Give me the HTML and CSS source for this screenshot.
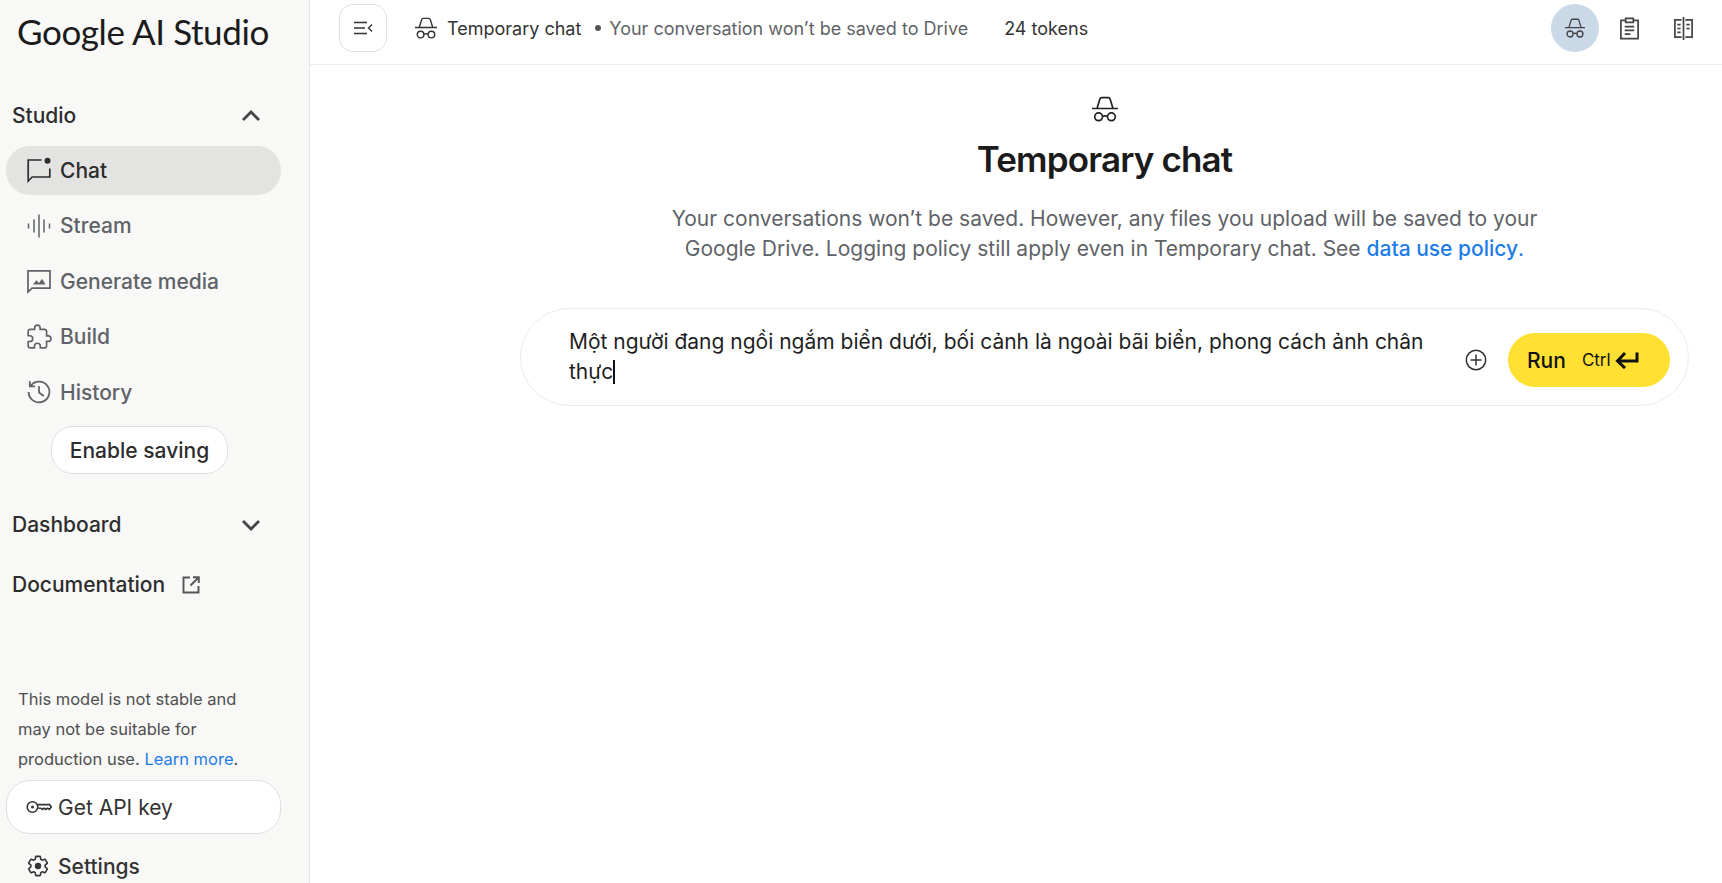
FILE: index.html
```html
<!DOCTYPE html>
<html lang="vi">
<head>
<meta charset="utf-8">
<title>Google AI Studio</title>
<link rel="stylesheet" href="styles.css">
</head>
<body>
<svg class="defs" width="0" height="0" aria-hidden="true">
  <symbol id="incognito" viewBox="0 0 26 26">
    <path d="M0 12.500h26M5 12.500L8 2.800q.4-1.200 1.600-1.200h6.800q1.200 0 1.600 1.200l3 9.700" fill="none" stroke="currentColor" stroke-width="1.700"/>
    <circle cx="6.600" cy="20.800" r="3.900" fill="none" stroke="currentColor" stroke-width="1.700"/>
    <circle cx="19.400" cy="20.800" r="3.900" fill="none" stroke="currentColor" stroke-width="1.700"/>
    <path d="M10.500 20.300q2.500-1 5 0" fill="none" stroke="currentColor" stroke-width="1.700"/>
  </symbol>
</svg>
<div class="app">
  <aside class="sidebar">
    <div class="logo">Google AI Studio</div>
    <div class="section-head studio-head">
      <span>Studio</span>
      <svg class="chev" viewBox="0 0 20 12"><path d="M2 10l8-8 8 8" fill="none" stroke="currentColor" stroke-width="2.800"/></svg>
    </div>
    <nav class="nav">
      <a class="nav-item active">
        <svg class="nav-icon" viewBox="0 0 26 26"><path d="M15.500 3H2.200v21l4-4h17.600v-8.500" fill="none" stroke="currentColor" stroke-width="1.700"/><circle cx="21.500" cy="3.800" r="3" fill="currentColor"/></svg>
        <span>Chat</span>
      </a>
      <a class="nav-item">
        <svg class="nav-icon" viewBox="0 0 26 26"><path d="M2.500 10.500v5M8 6.500v13M13 1.500v23M18 6.500v13M23.500 10.500v5" fill="none" stroke="currentColor" stroke-width="1.500"/></svg>
        <span>Stream</span>
      </a>
      <a class="nav-item">
        <svg class="nav-icon" viewBox="0 0 26 26"><path d="M2 24V2.800h22v17.400H6l-4 3.800z" fill="none" stroke="currentColor" stroke-width="1.700"/><path d="M7 16.500l3.400-4.200 2.600 2.600 3-4.200 3.600 5.800z" fill="currentColor"/></svg>
        <span>Generate media</span>
      </a>
      <a class="nav-item">
        <svg class="nav-icon" viewBox="0 0 24 24"><path d="M20.500 11H19V7c0-1.100-.9-2-2-2h-4V3.500C13 2.120 11.880 1 10.500 1S8 2.120 8 3.500V5H4c-1.100 0-1.990.9-1.990 2v3.800H3.500c1.490 0 2.700 1.210 2.700 2.700s-1.210 2.700-2.700 2.700H2V20c0 1.100.9 2 2 2h3.800v-1.500c0-1.490 1.210-2.700 2.700-2.700 1.490 0 2.700 1.210 2.700 2.700V22H17c1.100 0 2-.9 2-2v-4h1.500c1.380 0 2.500-1.120 2.500-2.500S21.880 11 20.500 11z" fill="none" stroke="currentColor" stroke-width="1.500"/></svg>
        <span>Build</span>
      </a>
      <a class="nav-item">
        <svg class="nav-icon" viewBox="0 0 26 26"><path d="M4.800 6.600A10.400 10.400 0 1 1 2.600 13M3.800 2.300v5h5.200" fill="none" stroke="currentColor" stroke-width="1.800"/><path d="M13 7.300v6.200l4.800 3.500" fill="none" stroke="currentColor" stroke-width="1.800"/></svg>
        <span>History</span>
      </a>
    </nav>
    <button class="enable-btn">Enable saving</button>
    <div class="section-head dash-head">
      <span>Dashboard</span>
      <svg class="chev" viewBox="0 0 20 12"><path d="M2 2l8 8 8-8" fill="none" stroke="currentColor" stroke-width="2.800"/></svg>
    </div>
    <div class="section-head doc-head">
      <span>Documentation</span>
      <svg class="ext" viewBox="0 0 20 20"><path d="M9 2.500H2.500v15h15V11M9.500 10.500L17.500 2.500M12 2.200h5.800V8" fill="none" stroke="currentColor" stroke-width="1.900"/></svg>
    </div>
    <div class="spacer"></div>
    <p class="note">This model is not stable and may not be suitable for production use. <a class="link">Learn more</a>.</p>
    <button class="api-btn">
      <svg class="key" viewBox="0 0 26 16"><circle cx="6.500" cy="8" r="5.300" fill="none" stroke="currentColor" stroke-width="1.600"/><circle cx="6.500" cy="8" r="1.500" fill="currentColor"/><path d="M11.800 5.600h11.700l1.800 2.400-2 2.400-1.700-1.200-1.700 1.200-1.700-1.200-1.700 1.200-1.700-1.200h-2.500" fill="none" stroke="currentColor" stroke-width="1.600"/></svg>
      <span>Get API key</span>
    </button>
    <div class="settings">
      <svg class="gear" viewBox="0 0 24 24"><path d="M19.140 12.940c.04-.3.06-.61.06-.94 0-.32-.02-.64-.07-.94l2.030-1.580c.18-.14.23-.41.12-.61l-1.920-3.320c-.12-.22-.37-.29-.59-.22l-2.390.96c-.5-.38-1.030-.7-1.620-.94l-.36-2.540c-.04-.24-.24-.41-.48-.41h-3.840c-.24 0-.43.17-.47.41l-.36 2.540c-.59.24-1.130.57-1.620.94l-2.390-.96c-.22-.08-.47 0-.59.22L2.740 8.870c-.12.21-.08.47.12.61l2.030 1.580c-.05.3-.09.63-.09.94s.02.64.07.94l-2.030 1.580c-.18.14-.23.41-.12.61l1.920 3.320c.12.22.37.29.59.22l2.390-.96c.5.38 1.030.7 1.620.94l.36 2.540c.05.24.24.41.48.41h3.840c.24 0 .44-.17.47-.41l.36-2.540c.59-.24 1.130-.56 1.620-.94l2.390.96c.22.08.47 0 .59-.22l1.920-3.320c.12-.22.07-.47-.12-.61l-2.010-1.580z" fill="none" stroke="currentColor" stroke-width="1.600" stroke-linejoin="round"/><circle cx="12" cy="12" r="3.200" fill="currentColor"/></svg>
      <span>Settings</span>
    </div>
  </aside>

  <main class="main">
    <header class="topbar">
      <button class="toggle">
        <svg viewBox="0 0 20 14" class="toggle-icon"><path d="M1 1.500h13M1 7h11M1 12.500h13M19 3.500L15.500 7l3.500 3.500" fill="none" stroke="currentColor" stroke-width="1.400"/></svg>
      </button>
      <svg class="top-hat"><use href="#incognito"/></svg>
      <span class="top-title">Temporary chat</span>
      <span class="dot"></span>
      <span class="top-sub">Your conversation won’t be saved to Drive</span>
      <span class="tokens">24 tokens</span>
      <div class="top-actions">
        <span class="round active-round"><svg class="top-hat-small"><use href="#incognito"/></svg></span>
        <span class="round">
          <svg class="act-icon" viewBox="0 0 22 24"><path d="M7 3.500H2v19h18v-19h-5M7 1.500h8v4H7zM6 10h10M6 14h10M6 18h6" fill="none" stroke="currentColor" stroke-width="1.800"/></svg>
        </span>
        <span class="round">
          <svg class="act-icon" viewBox="0 0 22 24"><path d="M11 0v24M9 3H2v18h7M13 3h7v18h-7M4.500 8H8M4.500 12H8M4.500 16H8M14 8h3.500M14 12h3.500" fill="none" stroke="currentColor" stroke-width="1.800"/></svg>
        </span>
      </div>
    </header>
    <section class="content">
      <svg class="hero-hat"><use href="#incognito"/></svg>
      <h1 class="hero-title">Temporary chat</h1>
      <p class="hero-text">Your conversations won’t be saved. However, any files you upload will be saved to your<br>Google Drive. Logging policy still apply even in Temporary chat. See <a class="link">data use policy</a><span class="link-dot">.</span></p>
      <div class="prompt">
        <div class="prompt-text">Một người đang ngồi ngắm biển dưới, bối cảnh là ngoài bãi biển, phong cách ảnh chân thực<span class="caret"></span></div>
        <svg class="plus" viewBox="0 0 22 22"><circle cx="11" cy="11" r="9.700" fill="none" stroke="currentColor" stroke-width="1.500"/><path d="M11 5.500v11M5.500 11h11" fill="none" stroke="currentColor" stroke-width="1.500"/></svg>
        <button class="run">
          <span class="run-label">Run</span>
          <span class="run-ctrl">Ctrl</span>
          <svg class="run-enter" viewBox="0 0 24 18"><path d="M22 1.500v8.500H3M10 2L2.500 10l7.500 7" fill="none" stroke="currentColor" stroke-width="3"/></svg>
        </button>
      </div>
    </section>
  </main>
</div>
</body>
</html>
```
FILE: styles.css
```css
* { box-sizing: border-box; }
html, body { margin: 0; height: 100%; overflow: hidden; }
body { font-family: Inter, "Liberation Sans", sans-serif; color: #1f1f1f; background: #fff; }
.defs { position: absolute; }
.app { display: flex; height: 883px; }

.sidebar { width: 310px; flex: none; background: #f8f8f6; border-right: 1px solid #e6e6e6; display: flex; flex-direction: column; padding: 0 0 0 6px; }
.logo { font-family: Lato, sans-serif; font-size: 35px; line-height: 44px; color: #1b1b1b; margin: 9px 0 0 11px; letter-spacing: -0.4px; white-space: nowrap; }
.section-head { display: flex; align-items: center; font-size: 21px; line-height: 28px; color: #2d2d2d; padding-left: 6px; font-weight: 450; }
.section-head span { flex: none; }
.studio-head { margin-top: 49px; }
.dash-head { margin-top: 36.500px; }
.doc-head { margin-top: 32px; }
.chev { width: 20px; height: 12px; margin-left: auto; margin-right: 48px; color: #444; }
.ext { width: 20px; height: 20px; margin-left: 16px; color: #555; }
.nav { display: flex; flex-direction: column; margin-top: 15.700px; width: 275px; }
.nav-item { display: flex; align-items: center; height: 49px; margin-bottom: 6.500px; padding-left: 20px; border-radius: 24px; font-size: 21px; color: #5f6368; gap: 8px; font-weight: 450; }
.nav-item.active { background: #e3e3e1; color: #2d2d2d; }
.nav-icon { width: 26px; height: 26px; flex: none; }
.enable-btn { align-self: flex-start; margin: 3px 0 0 45px; height: 48px; width: 177px; border: 1px solid #e0e0e0; border-radius: 22px; background: #fff; font: 450 21px Inter, sans-serif; color: #2d2d2d; }
.spacer { flex: 1; }
.note { margin: 0 0 0 12px; width: 250px; font-size: 16.500px; line-height: 30px; color: #4f4f4f; }
.link { color: #1e7ce8; }
.api-btn { display: flex; align-items: center; gap: 6px; width: 275px; height: 54px; margin-top: 6px; padding: 0 0 0 19px; border: 1px solid #e0e0e0; border-radius: 24px; background: #fff; font: 400 21px Inter, sans-serif; color: #333; }
.key { width: 26px; height: 16px; flex: none; }
.settings { display: flex; align-items: center; gap: 8px; padding-left: 20px; height: 30px; margin: 17px 0 2px; font-size: 21px; font-weight: 450; color: #333; }
.gear { width: 24px; height: 24px; flex: none; }

.main { flex: 1; min-width: 0; display: flex; flex-direction: column; }
.topbar { display: flex; align-items: center; height: 65px; border-bottom: 1px solid #ececec; padding: 0 0 8px 29px; flex: none; }
.toggle { width: 48px; height: 48px; border: 1px solid #e0e0e0; border-radius: 14px; background: #fff; padding: 0; display: flex; align-items: center; justify-content: center; color: #333; }
.toggle-icon { width: 20px; height: 14px; }
.top-hat { width: 22px; height: 22px; margin-left: 28px; color: #333; }
.top-title { margin-left: 10px; font-size: 18px; color: #333; }
.dot { width: 6px; height: 6px; border-radius: 50%; background: #555; margin: 0 8px 0 14px; }
.top-sub { font-size: 18px; color: #5f6368; }
.tokens { margin-left: 36px; font-size: 18px; color: #333; }
.top-actions { margin-left: auto; display: flex; align-items: center; padding-right: 15px; gap: 6px; }
.round { width: 48px; height: 48px; border-radius: 50%; display: flex; align-items: center; justify-content: center; color: #444; }
.active-round { background: #c9d9e8; }
.top-hat-small { width: 20px; height: 20px; }
.act-icon { width: 21px; height: 23px; }

.content { flex: 1; display: flex; flex-direction: column; align-items: center; padding: 31px 33px 0 210px; }
.hero-hat { width: 26px; height: 26px; color: #222; }
.hero-title { margin: 15px 0 0; font-size: 35px; line-height: 44px; font-weight: 600; color: #1b1b1b; letter-spacing: -0.85px; }
.hero-text { margin: 23px 0 0; font-size: 21px; line-height: 30px; text-align: center; color: #5f6368; }
.hero-text .link { font-weight: 500; }
.link-dot { color: #1e7ce8; }
.prompt { display: flex; align-items: center; width: 100%; height: 98px; margin-top: 44px; border: 1px solid #ececec; border-radius: 50px; padding: 0 18px 0 48px; }
.prompt-text { flex: 1; font-size: 21px; line-height: 30px; color: #1f1f1f; padding-right: 30px; }
.caret { display: inline-block; width: 1.500px; height: 24px; background: #111; vertical-align: -5px; }
.plus { width: 22px; height: 22px; color: #333; flex: none; margin: 6px 21px 0 0; }
.run { display: flex; align-items: center; width: 162px; height: 54px; margin-top: 6px; flex: none; border: 0; border-radius: 27px; background: #ffe033; padding: 0 0 0 19px; color: #111; font-family: Inter, sans-serif; }
.run-label { font-size: 21px; font-weight: 500; }
.run-ctrl { font-size: 17px; margin-left: 16px; }
.run-enter { width: 24px; height: 18px; margin-left: 4px; }
```
